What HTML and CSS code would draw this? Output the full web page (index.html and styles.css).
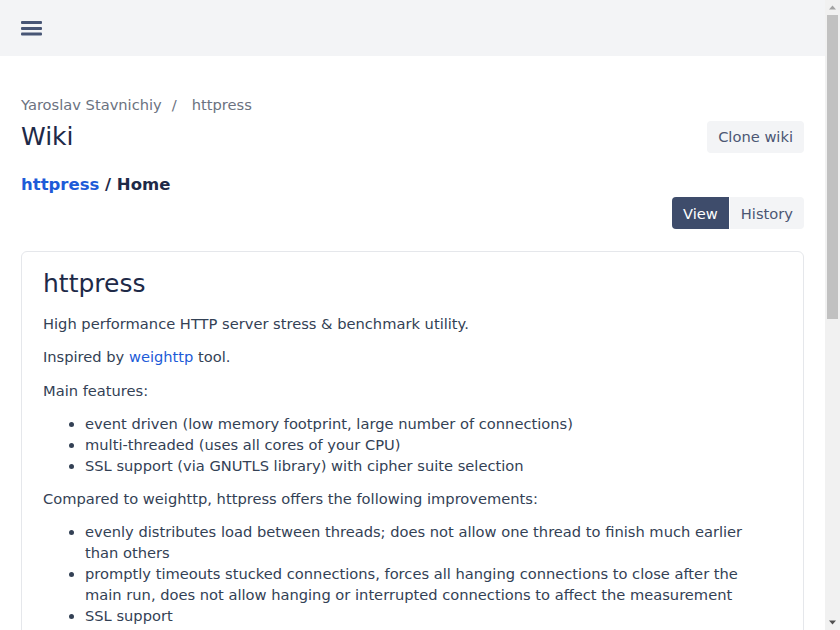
FILE: index.html
```html
<!DOCTYPE html>
<html>
<head>
<meta charset="utf-8">
<link rel="stylesheet" href="styles.css">
</head>
<body>
<header class="topbar">
  <button class="menu-btn" aria-label="Menu">
    <svg width="21" height="15" viewBox="0 0 21 15"><rect x="0" y="0" width="21" height="3" rx="1"/><rect x="0" y="6" width="21" height="3" rx="1"/><rect x="0" y="11.5" width="21" height="3" rx="1"/></svg>
  </button>
</header>
<main class="page">
  <nav class="crumbs"><span>Yaroslav Stavnichiy</span><span class="sep">/</span><span>httpress</span></nav>
  <div class="title-row">
    <h1 class="title">Wiki</h1>
    <button class="btn">Clone wiki</button>
  </div>
  <div class="path"><a href="#">httpress</a> / Home</div>
  <div class="tabs-row">
    <div class="tabs"><button class="tab active">View</button><button class="tab">History</button></div>
  </div>
  <article class="card">
    <h2>httpress</h2>
    <p>High performance HTTP server stress &amp; benchmark utility.</p>
    <p>Inspired by <a href="#">weighttp</a> tool.</p>
    <p>Main features:</p>
    <ul>
      <li>event driven (low memory footprint, large number of connections)</li>
      <li>multi-threaded (uses all cores of your CPU)</li>
      <li>SSL support (via GNUTLS library) with cipher suite selection</li>
    </ul>
    <p>Compared to weighttp, httpress offers the following improvements:</p>
    <ul>
      <li>evenly distributes load between threads; does not allow one thread to finish much earlier than others</li>
      <li>promptly timeouts stucked connections, forces all hanging connections to close after the main run, does not allow hanging or interrupted connections to affect the measurement</li>
      <li>SSL support</li>
    </ul>
    <h3>Usage</h3>
    <pre>httpress &lt;options&gt; &lt;url&gt;
  -n num   number of requests     (default: 1)
  -t num   number of threads      (default: 1)
  -c num   concurrent connections (default: 1)
  -k       keep alive             (default: no)
  -q       no progress indication (default: no)
  -z pri   GNUTLS cipher priority (default: NORMAL)
  -h header add header to every request
  -v       print version number and exit</pre>
    <p>Example:</p>
    <pre>httpress -n 10000 -c 100 -t 4 -k http://localhost:8080/index.html</pre>
    <h3>Dependencies</h3>
    <ul>
      <li>libev (event loop library)</li>
      <li>GNUTLS (optional, for SSL support)</li>
    </ul>
    <h3>Building</h3>
    <p>Run <code>make</code> in the source directory. To build without SSL support set <code>WITHOUT_SSL=1</code>.</p>
  </article>
</main>
<div class="scrollbar" aria-hidden="true">
  <div class="sb-arrow">
    <svg width="15" height="15" viewBox="0 0 15 15"><path d="M4 9.5h7L7.5 5.5z" fill="#a3a3a3"/></svg>
  </div>
  <div class="sb-track"><div class="sb-thumb"></div></div>
  <div class="sb-arrow">
    <svg width="15" height="15" viewBox="0 0 15 15"><path d="M4 5.5h7L7.5 9.5z" fill="#505050"/></svg>
  </div>
</div>
</body>
</html>
```
FILE: styles.css
```css
html, body {
  margin: 0;
  padding: 0;
}
body {
  font-family: "DejaVu Sans", sans-serif;
  font-size: 14.67px;
  line-height: 21px;
  color: #334155;
  background: #ffffff;
  margin-right: 15px;
}
.scrollbar {
  position: fixed;
  top: 0;
  right: 0;
  width: 15px;
  height: 100vh;
  background: #f1f1f1;
  display: flex;
  flex-direction: column;
}
.sb-arrow {
  height: 15px;
  display: flex;
}
.sb-track {
  flex: 1;
  padding: 0 2px;
}
.sb-thumb {
  height: 304px;
  background: #c1c1c1;
}
.topbar {
  height: 56px;
  background: #f3f4f6;
  display: flex;
  align-items: center;
  padding: 0 21px;
}
.menu-btn {
  border: 0;
  background: transparent;
  padding: 0;
  display: flex;
}
.menu-btn svg {
  fill: #475575;
}
.page {
  padding: 38px 21px 40px 21px;
}
.crumbs {
  color: #6b7280;
  display: flex;
}
.crumbs .sep {
  margin: 0 15px 0 10px;
}
.title-row {
  margin-top: 6px;
  display: flex;
  justify-content: space-between;
  align-items: center;
}
.title {
  margin: 0;
  font-size: 25px;
  font-weight: 400;
  line-height: 32px;
  color: #1e2a48;
}
.btn {
  font-family: inherit;
  font-size: 14.67px;
  line-height: 20px;
  height: 32px;
  padding: 0 11px;
  border: 0;
  border-radius: 4px;
  background: #f3f4f6;
  color: #4b5673;
}
.path {
  margin-top: 20px;
  font-size: 16.5px;
  font-weight: 700;
  line-height: 24px;
  color: #1e2a48;
}
.path a {
  color: #1d5bd8;
  text-decoration: none;
}
.tabs-row {
  display: flex;
  justify-content: flex-end;
}
.tabs {
  display: flex;
  border-radius: 4px;
  overflow: hidden;
}
.tab {
  font-family: inherit;
  font-size: 14.67px;
  height: 32px;
  border: 0;
  padding: 0 11px;
  background: #f3f4f6;
  color: #4b5673;
}
.tab.active {
  background: #3e4c6b;
  color: #ffffff;
  margin-right: 1px;
}
.card {
  margin-top: 22px;
  border: 1px solid #e5e7eb;
  border-radius: 6px;
  padding: 16px 34px 20px 21px;
}
.card h2 {
  margin: 0;
  font-size: 25px;
  font-weight: 400;
  line-height: 32px;
  color: #1e2a48;
}
.card h3 {
  margin: 20px 0 0 0;
  font-size: 20px;
  font-weight: 400;
  line-height: 28px;
  color: #1e2a48;
}
.card p {
  margin: 12.5px 0 0 0;
}
.card ul {
  margin: 12px 0 0 0;
  padding-left: 42px;
}
.card pre {
  margin: 12.5px 0 0 0;
  padding: 10px 12px;
  background: #f3f4f6;
  border-radius: 4px;
  font-family: "DejaVu Sans Mono", monospace;
  font-size: 13px;
  line-height: 19px;
  overflow: hidden;
}
.card code {
  font-family: "DejaVu Sans Mono", monospace;
  font-size: 13px;
}
.card a {
  color: #1d5bd8;
  text-decoration: none;
}
```
